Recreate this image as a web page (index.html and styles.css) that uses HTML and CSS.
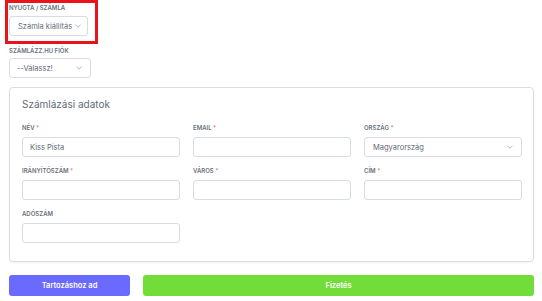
FILE: index.html
```
<!DOCTYPE html>
<html lang="hu">
<head>
    <meta charset="utf-8" />
    <title>Fizetés</title>
    <link rel="stylesheet" href="styles.css">
</head>
<body>
    <div class="page">

        <!-- kiemelés -->
        <div class="highlight"></div>

        <div class="topField">
            <div class="label">Nyugta / Számla</div>
            <div class="select selectNarrow">
                <span>Számla kiállítás</span>
                <svg class="chev" width="6" height="4" viewBox="0 0 6 4"><path d="M0.5 0.8 L3 3.2 L5.5 0.8" fill="none" stroke="#9aa1ad" stroke-width="0.8"/></svg>
            </div>
        </div>

        <div class="topField second">
            <div class="label">Számlázz.hu fiók</div>
            <div class="select selectWide">
                <span>--Válassz!</span>
                <svg class="chev" width="6" height="4" viewBox="0 0 6 4"><path d="M0.5 0.8 L3 3.2 L5.5 0.8" fill="none" stroke="#9aa1ad" stroke-width="0.8"/></svg>
            </div>
        </div>

        <div class="card">
            <h1>Számlázási adatok</h1>
            <div class="formGrid">
                <div class="field">
                    <div class="label">Név <b>*</b></div>
                    <div class="input">Kiss Pista</div>
                </div>
                <div class="field">
                    <div class="label">Email <b>*</b></div>
                    <div class="input"></div>
                </div>
                <div class="field">
                    <div class="label">Ország <b>*</b></div>
                    <div class="select">
                        <span>Magyarország</span>
                        <svg class="chev" width="6" height="4" viewBox="0 0 6 4"><path d="M0.5 0.8 L3 3.2 L5.5 0.8" fill="none" stroke="#9aa1ad" stroke-width="0.8"/></svg>
                    </div>
                </div>
                <div class="field">
                    <div class="label">Irányítószám <b>*</b></div>
                    <div class="input"></div>
                </div>
                <div class="field">
                    <div class="label">Város <b>*</b></div>
                    <div class="input"></div>
                </div>
                <div class="field">
                    <div class="label">Cím <b>*</b></div>
                    <div class="input"></div>
                </div>
                <div class="field">
                    <div class="label">Adószám</div>
                    <div class="input"></div>
                </div>
            </div>
        </div>

        <div class="buttons">
            <div class="btn btnDebt">Tartozáshoz ad</div>
            <div class="btn btnPay">Fizetés</div>
        </div>

    </div>
</body>
</html>
```

FILE: styles.css
```
body {
    margin: 0;
    background-color: #FFFFFF;
    font-family: Inter, "Noto Sans", sans-serif;
    color: #4b5361;
}

.page {
    position: relative;
    padding: 4px 8px 0 9px;
}

.highlight {
    position: absolute;
    left: 5px;
    top: 0px;
    width: 87px;
    height: 38px;
    border: 3px solid #e8131b;
}

.label {
    font-size: 6px;
    line-height: 8px;
    font-weight: 600;
    text-transform: uppercase;
    color: #6a717d;
}

.label b {
    color: #f07068;
    font-weight: 600;
}

.topField .label {
    margin-bottom: 4px;
}

.topField.second {
    margin-top: 11px;
}

.topField.second .label {
    margin-bottom: 3px;
}

.select,
.input {
    box-sizing: border-box;
    height: 20px;
    border: 1px solid #d8dce3;
    border-radius: 3px;
    font-size: 7.5px;
    color: #626a76;
    display: flex;
    align-items: center;
    padding: 0 6px 0 7px;
}

.select {
    justify-content: space-between;
}

.selectNarrow {
    width: 79px;
    padding-left: 8px;
}

.selectWide {
    width: 82px;
    padding-right: 8px;
}

.chev {
    display: block;
}

.card {
    margin-top: 9px;
    border: 1px solid #d9dde5;
    border-radius: 4px;
    box-shadow: 0 1px 2px rgba(0, 0, 0, 0.06);
    padding: 9px 12px 18px 12px;
}

h1 {
    margin: 0;
    font-size: 10px;
    line-height: 14px;
    font-weight: 400;
    color: #626b79;
}

.formGrid {
    margin-top: 13px;
    display: grid;
    grid-template-columns: 158px 158px 158px;
    column-gap: 13px;
    row-gap: 10px;
}

.field .label {
    margin-bottom: 5px;
}

.field .select {
    padding-left: 8px;
    padding-right: 8px;
}

.buttons {
    margin-top: 13px;
    display: flex;
    gap: 13px;
}

.btn {
    height: 21px;
    border-radius: 3px;
    color: #FFFFFF;
    font-size: 7.5px;
    font-weight: 600;
    display: flex;
    align-items: center;
    justify-content: center;
}

.btnDebt {
    width: 121px;
    background-color: #6a6afe;
}

.btnPay {
    flex: 1;
    background-color: #72dd39;
}
```
